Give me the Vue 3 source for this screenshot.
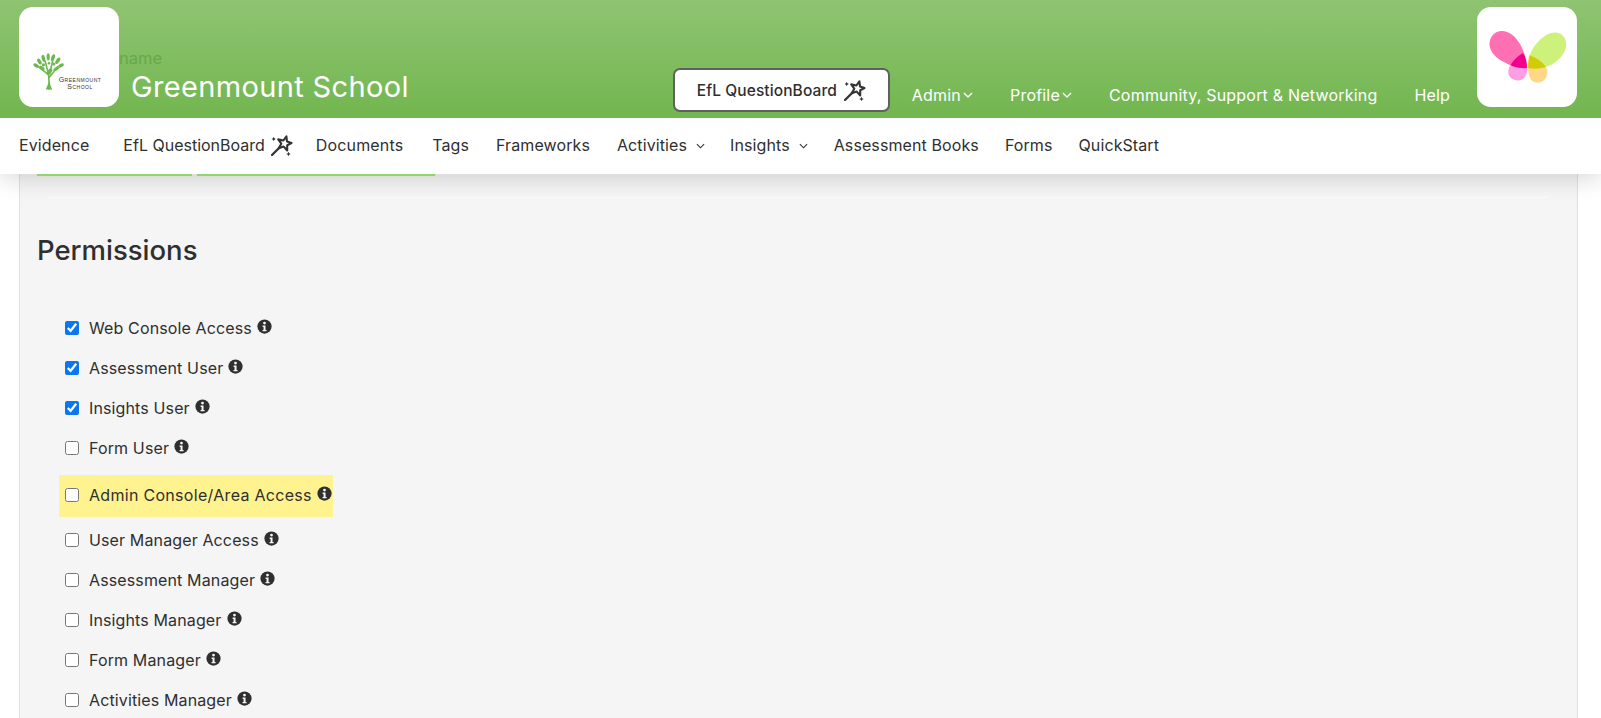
<script setup>
const links = [
  { label: 'Admin', caret: true },
  { label: 'Profile', caret: true },
  { label: 'Community, Support & Networking' },
  { label: 'Help' },
]
const navItems = [
  { label: 'Evidence', cls: 'n-evidence' },
  { label: 'EfL QuestionBoard', wand: true, cls: 'n-efl' },
  { label: 'Documents', cls: 'n-docs' },
  { label: 'Tags', cls: 'n-tags' },
  { label: 'Frameworks', cls: 'n-fw' },
  { label: 'Activities', caret: true, cls: 'n-act' },
  { label: 'Insights', caret: true, cls: 'n-ins' },
  { label: 'Assessment Books', cls: 'n-books' },
  { label: 'Forms', cls: 'n-forms' },
  { label: 'QuickStart', cls: 'n-qs' },
]
const perms = [
  { label: 'Web Console Access', checked: true },
  { label: 'Assessment User', checked: true },
  { label: 'Insights User', checked: true },
  { label: 'Form User' },
  { label: 'Admin Console/Area Access', highlight: true },
  { label: 'User Manager Access' },
  { label: 'Assessment Manager' },
  { label: 'Insights Manager' },
  { label: 'Form Manager' },
  { label: 'Activities Manager' },
]
</script>

<template>
  <div class="page">
    <header class="topbar">
      <div class="logo">
        <svg class="tree" viewBox="0 0 40 46" fill="none">
          <path d="M20 45C20.500 38 20 32 19.500 27 16 23 12 21 8 17M20 30C23 26 27 22 31 16M19.500 27C18 21 17 15 15 9M21 26C22 20 23 14 25 8" stroke="#6cb84f" stroke-width="2"/>
          <path d="M16 45 20 35 24 45Z" fill="#6cb84f"/>
          <g fill="#6cb84f">
            <ellipse cx="4" cy="15" rx="4" ry="2.200" transform="rotate(35 4 15)"/>
            <ellipse cx="8" cy="10" rx="4" ry="2.200" transform="rotate(60 8 10)"/>
            <ellipse cx="13" cy="6" rx="4.500" ry="2.200" transform="rotate(75 13 6)"/>
            <ellipse cx="19" cy="4" rx="4.500" ry="2" transform="rotate(90 19 4)"/>
            <ellipse cx="25" cy="5" rx="4.500" ry="2.200" transform="rotate(110 25 5)"/>
            <ellipse cx="31" cy="9" rx="4.500" ry="2.200" transform="rotate(125 31 9)"/>
            <ellipse cx="35" cy="15" rx="4" ry="2.200" transform="rotate(150 35 15)"/>
            <ellipse cx="11" cy="18" rx="4" ry="2" transform="rotate(30 11 18)"/>
            <ellipse cx="29" cy="19" rx="4" ry="2" transform="rotate(150 29 19)"/>
            <ellipse cx="21" cy="22" rx="4" ry="2.500" transform="rotate(130 21 22)"/>
            <circle cx="13" cy="14" r="2"/>
            <circle cx="26" cy="13" r="2"/>
            <circle cx="20" cy="12" r="1.600"/>
          </g>
        </svg>
        <div class="tree-text"><span>Greenmount</span><span>School</span></div>
      </div>
      <div class="school">
        <span class="school-label">School name</span>
        <span class="school-name">Greenmount School</span>
      </div>
      <div class="top-actions">
        <button class="qb-btn" type="button">
          <span>EfL QuestionBoard</span>
          <svg class="wand" viewBox="0 0 22 22"><use href="#wand-icon"/></svg>
        </button>
        <a v-for="l in links" :key="l.label" class="top-link">
          {{ l.label }}
          <svg v-if="l.caret" class="caret" viewBox="0 0 10 6"><path d="M1 1l4 4 4-4" fill="none" stroke="currentColor" stroke-width="1.400"/></svg>
        </a>
      </div>
      <div class="logo logo-right">
        <svg class="fly" viewBox="0 0 100 100">
          <defs>
            <clipPath id="wl"><path d="M50 61C50 53 47 44 43 37 38 29 32 24 25 24 17 24 12 31 12.500 38 13 45 20 52 27 55 34 59 42 62 50 61Z"/></clipPath>
            <clipPath id="wr"><path d="M51 61C51 50 55 41 60 36 65 30 72 25 79 25.500 86 26 90 32 89 40 88 47 81 54 74 58 67 61 58 63 51 61Z"/></clipPath>
          </defs>
          <path d="M50 61C50 53 47 44 43 37 38 29 32 24 25 24 17 24 12 31 12.500 38 13 45 20 52 27 55 34 59 42 62 50 61Z" fill="#ff6fb4"/>
          <path d="M51 61C51 50 55 41 60 36 65 30 72 25 79 25.500 86 26 90 32 89 40 88 47 81 54 74 58 67 61 58 63 51 61Z" fill="#cdf27c"/>
          <path d="M46 46C49.500 51 50.800 58 50.300 63 50 69 46 73.500 41 73.500 35 73.500 31 69.500 31.300 64.500 31.500 59 38 50 46 46Z" fill="#ff9fe3"/>
          <path d="M52 48C58 50 66 55 69 60 71.500 64 70.500 71 66 74 62 76.500 56 76 53.500 72 50.500 67 50.500 56 52 48Z" fill="#ffd787"/>
          <path d="M46 46C49.500 51 50.800 58 50.300 63 50 69 46 73.500 41 73.500 35 73.500 31 69.500 31.300 64.500 31.500 59 38 50 46 46Z" fill="#f0008c" clip-path="url(#wl)"/>
          <path d="M52 48C58 50 66 55 69 60 71.500 64 70.500 71 66 74 62 76.500 56 76 53.500 72 50.500 67 50.500 56 52 48Z" fill="#cfce05" clip-path="url(#wr)"/>
        </svg>
      </div>
    </header>

    <nav class="mainnav">
      <a v-for="n in navItems" :key="n.label" class="nav-item" :class="n.cls">
        {{ n.label }}
        <svg v-if="n.wand" class="wand" viewBox="0 0 22 22"><use href="#wand-icon"/></svg>
        <svg v-if="n.caret" class="caret nav-caret" viewBox="0 0 10 6"><path d="M1 1l4 4 4-4" fill="none" stroke="currentColor" stroke-width="1.200"/></svg>
      </a>
    </nav>

    <main class="card">
      <div class="tabs">
        <span class="tab tab-a"></span>
        <span class="tab tab-b"></span>
      </div>
      <hr class="rule" />
      <h2 class="heading">Permissions</h2>
      <ul class="perms">
        <li v-for="p in perms" :key="p.label" class="perm" :class="{ hl: p.highlight }">
          <input type="checkbox" class="check" :checked="p.checked" />
          <span class="perm-label">{{ p.label }}</span>
          <svg class="info" viewBox="0 0 16 16">
            <circle cx="8" cy="8" r="7.600" fill="#2f2f2f"/>
            <circle cx="8" cy="4.300" r="1.500" fill="#f5f5f5"/>
            <path d="M6 7h3.100v4.600H10.200V13H5.900v-1.400H7V8.400H6Z" fill="#f5f5f5"/>
          </svg>
        </li>
      </ul>
    </main>

    <svg class="defs" width="0" height="0">
      <symbol id="wand-icon" viewBox="0 0 22 22">
        <path d="M1 21 9.300 12.700" stroke="#333" stroke-width="2.300" stroke-linecap="round"/>
        <path d="M15.400 2.300 16 7.500 20.500 9.100 16.200 11.200 16.200 16.500 12.700 12.600 7.700 14.200 10.300 9.700 7.200 5.400 12.400 6.500Z" fill="#fff" stroke="#333" stroke-width="2.100" stroke-linejoin="round"/>
        <path d="M2.700 2.800 3.400 4.300 4.900 5 3.400 5.700 2.700 7.200 2 5.700.5 5 2 4.300Z" fill="#333"/>
        <path d="M17.500 17.800 18.200 19.300 19.700 20 18.200 20.700 17.500 22.200 16.800 20.700 15.300 20 16.800 19.300Z" fill="#333"/>
      </symbol>
    </svg>
  </div>
</template>

<style>
html, body { margin: 0; background: #fff; }
</style>

<style scoped>
.page {
  height: 718px;
  overflow: hidden;
  font-family: Inter, "Liberation Sans", sans-serif;
  color: #2f2f2f;
  background: #fff;
  position: relative;
}
.topbar {
  height: 118px;
  box-sizing: border-box;
  padding: 7px 24px 0 19px;
  display: flex;
  align-items: flex-start;
  background: linear-gradient(180deg, #8fc472 0%, #72b64f 100%);
  position: relative;
  z-index: 3;
}
.logo {
  width: 100px;
  height: 100px;
  background: #fff;
  border-radius: 14px;
  position: relative;
  flex: none;
  z-index: 1;
}
.tree {
  position: absolute;
  left: 14px;
  top: 46px;
  width: 32px;
  height: 38px;
}
.tree-text {
  position: absolute;
  left: 36px;
  top: 69px;
  width: 50px;
  display: flex;
  flex-direction: column;
  align-items: center;
  font: 7px/7px "Liberation Sans", sans-serif;
  font-variant: small-caps;
  color: #333;
  letter-spacing: .5px;
}
.logo-right { margin-left: auto; }
.fly { width: 100px; height: 100px; display: block; }
.school {
  position: relative;
  margin-left: 12px;
  padding-top: 63px;
  flex: none;
}
.school-label {
  position: absolute;
  right: calc(100% - 31px);
  top: 41px;
  font-size: 16.500px;
  line-height: 20px;
  color: #68a84c;
  white-space: nowrap;
}
.school-name {
  font-size: 29px;
  line-height: 34px;
  letter-spacing: .35px;
  color: #fff;
  white-space: nowrap;
  display: block;
}
.top-actions {
  margin-left: 264px;
  display: flex;
  align-items: center;
  align-self: flex-start;
  padding-top: 61px;
  color: #fff;
  font-size: 16px;
  letter-spacing: .2px;
  flex: none;
}
.qb-btn {
  width: 217px;
  height: 44px;
  box-sizing: border-box;
  border: 2px solid #606060;
  border-radius: 7px;
  background: #fff;
  display: flex;
  align-items: center;
  justify-content: center;
  gap: 7px;
  font: 500 15.500px Inter, sans-serif;
  letter-spacing: .1px;
  color: #2f2f2f;
  margin-right: 22px;
}
.top-link {
  display: inline-flex;
  align-items: center;
  gap: 2px;
  white-space: nowrap;
  padding-top: 9px;
  margin-right: 37px;
}
.top-link:last-child { margin-right: 0; }
.wand { width: 22px; height: 22px; flex: none; }
.caret { width: 10px; height: 6px; margin-top: 1px; }
.mainnav {
  height: 56px;
  box-sizing: border-box;
  padding: 0 0 2px 19px;
  display: flex;
  align-items: center;
  background: #fff;
  font-size: 16px;
  letter-spacing: .1px;
  color: #2f2f2f;
  box-shadow: 0 4px 24px rgba(0, 0, 0, .16);
  position: relative;
  z-index: 2;
}
.nav-item {
  display: inline-flex;
  align-items: center;
  gap: 7px;
  white-space: nowrap;
  margin-right: 27px;
}
.n-evidence { margin-right: 34px; }
.n-efl { margin-right: 23px; letter-spacing: 0; gap: 6px; }
.n-docs { margin-right: 29px; letter-spacing: .15px; }
.n-act { margin-right: 25px; }
.n-ins { margin-right: 26px; }
.n-books { margin-right: 26px; }
.n-forms { margin-right: 26px; }
.nav-caret { width: 9px; height: 6px; margin-left: 2px; }
.card {
  margin: 0 23px 0 19px;
  box-sizing: border-box;
  height: 544px;
  background: #f5f5f5;
  border-left: 1.500px solid #e0e0e0;
  border-right: 1.500px solid #e0e0e0;
  padding: 0 0 0 17px;
}
.tabs { display: flex; gap: 5px; height: 1px; position: relative; z-index: 3; }
.tab { height: 1.500px; background: #8fd66e; display: block; flex: none; }
.tab-a { width: 155px; }
.tab-b { width: 238px; }
.rule {
  border: 0;
  height: 1px;
  background: #fbfbfb;
  margin: 22px 28px 0 11px;
}
.heading {
  margin: 34px 0 0;
  font-size: 27.500px;
  line-height: 36px;
  font-weight: 500;
  color: #2f2f2f;
}
.perms {
  list-style: none;
  margin: 40px 0 0;
  padding: 0 0 0 23px;
  display: flex;
  flex-direction: column;
  align-items: flex-start;
}
.perm {
  display: flex;
  align-items: center;
  height: 40px;
  font-size: 16px;
  letter-spacing: .13px;
  line-height: 20px;
}
.perm.hl {
  box-sizing: border-box;
  height: 42px;
  margin: 7px 0 3px -1px;
  padding: 0 0 2px 1px;
  width: 274px;
  background: #fff38f;
  letter-spacing: .3px;
}
.check {
  width: 14px;
  height: 14px;
  margin: 0 10px 0 5px;
  flex: none;
  accent-color: #0b76ef;
}
.perm-label { white-space: nowrap; }
.info { width: 15px; height: 15px; margin: -3px 0 0 5px; flex: none; }
.defs { position: absolute; }
</style>
